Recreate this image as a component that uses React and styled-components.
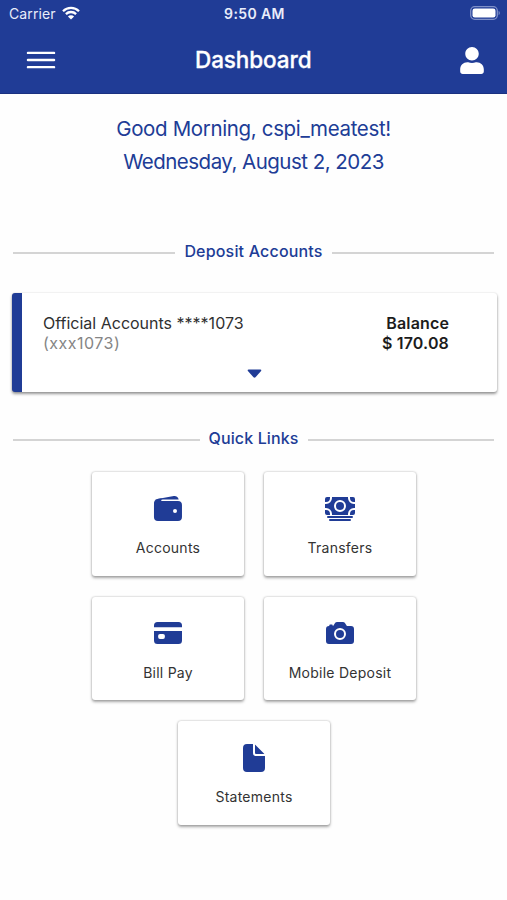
/* eslint-disable react/prop-types */
import styled, { createGlobalStyle } from "styled-components";
import { FaUser } from "react-icons/fa";
import {
  IoCamera,
  IoCard,
  IoCash,
  IoDocument,
  IoMenuOutline,
  IoWallet,
} from "react-icons/io5";

const blue = "#203c96";

const GlobalStyle = createGlobalStyle`
  * {
    box-sizing: border-box;
  }

  body {
    margin: 0;
    background-color: #fefefe;
    font-family: Inter, "Liberation Sans", sans-serif;
  }

  svg {
    display: block;
  }
`;

const Page = styled.div`
  width: 100%;
  min-height: 900px;
`;

const Top = styled.header`
  height: 94px;
  background-color: ${blue};
  border-bottom: 1px solid #1b3180;
  color: white;
`;

const StatusBar = styled.div`
  height: 27px;
  padding: 0 7px 0 9px;
  display: grid;
  grid-template-columns: 1fr auto 1fr;
  align-items: center;
  line-height: 27px;
  color: #e9edfa;
`;

const Carrier = styled.div`
  display: flex;
  align-items: center;
  gap: 6px;
  font-size: 14px;
  letter-spacing: 0.1px;

  svg {
    margin-bottom: 2px;
  }
`;

const Clock = styled.div`
  font-weight: 600;
  font-size: 14px;
  letter-spacing: 0.4px;
`;

const Battery = styled.svg`
  justify-self: end;
  margin-bottom: 1px;
`;

const TitleBar = styled.div`
  height: 66px;
  padding: 0 23px 0 21.5px;
  display: grid;
  grid-template-columns: 1fr auto 1fr;
  align-items: center;
`;

const IconButton = styled.button`
  padding: 0;
  border: 0;
  background: none;
  color: white;
  justify-self: ${(props) => props.$side};
`;

const ProfileIcon = styled(FaUser)`
  width: 24px;
  height: 27px;
`;

const Title = styled.h1`
  margin: 0 0 2px 1px;
  font-size: 22.5px;
  font-weight: 500;
  letter-spacing: -0.1px;
  -webkit-text-stroke: 0.3px;
`;

const Greeting = styled.div`
  padding-top: 18px;
  height: 144px;
  color: ${blue};
  text-align: center;
`;

const GreetingLine = styled.p`
  margin: 0;
  font-size: 20.5px;
  line-height: 33px;
  letter-spacing: ${(props) => props.$spacing};
`;

const SectionTitle = styled.h2`
  margin: 0 13px;
  height: 26px;
  display: flex;
  align-items: center;
  gap: 9px;
  font-size: 16px;
  font-weight: 500;
  line-height: 26px;
  letter-spacing: ${(props) => props.$spacing};
  color: ${blue};

  &::before,
  &::after {
    content: "";
    flex: 1;
    height: 2px;
    margin-top: 4px;
    background-color: #d4d4d4;
  }
`;

const AccountCard = styled.section`
  margin: 29px 10px 33px 12px;
  height: 99px;
  padding: 21px 48px 0 21px;
  border-left: 10px solid ${blue};
  border-radius: 3px;
  background-color: white;
  box-shadow: 0 2px 3px rgba(0, 0, 0, 0.4), 0 0 2px rgba(0, 0, 0, 0.14);
  display: flex;
  flex-direction: column;
`;

const AccountRow = styled.div`
  display: flex;
  justify-content: space-between;
  font-size: 16px;
  line-height: 19.5px;
  color: #303030;
`;

const Muted = styled.div`
  letter-spacing: 0.5px;
  color: #858585;
`;

const Balance = styled.div`
  text-align: right;
  font-weight: 600;
  letter-spacing: 0.15px;
  color: #1c1c1c;
`;

const Caret = styled.svg`
  margin: 16px 0 0 204px;
`;

const Links = styled.nav`
  width: 324px;
  margin: 21px 0 0 92px;
  display: flex;
  flex-wrap: wrap;
  justify-content: center;
  gap: 21px 20px;
`;

const LinkCard = styled.a`
  width: 152px;
  height: 103.5px;
  padding-top: 20.5px;
  display: flex;
  flex-direction: column;
  align-items: center;
  gap: 13.5px;
  border-radius: 3px;
  background-color: white;
  box-shadow: 0 1.5px 3px rgba(0, 0, 0, 0.34), 0 0 2px rgba(0, 0, 0, 0.2);
  color: ${blue};
`;

const LinkLabel = styled.span`
  font-size: 14px;
  line-height: 20px;
  letter-spacing: 0.25px;
  color: #333;
`;

const quickLinks = [
  { label: "Accounts", Icon: IoWallet },
  { label: "Transfers", Icon: IoCash },
  { label: "Bill Pay", Icon: IoCard },
  { label: "Mobile Deposit", Icon: IoCamera },
  { label: "Statements", Icon: IoDocument },
];

function Header() {
  return (
    <Top>
      <StatusBar>
        <Carrier>
          <span>Carrier</span>
          <svg width="18" height="14" viewBox="0 0 18 14" fill="none">
            <path
              d="M1 5.2a11.4 11.4 0 0 1 16 0M3.9 8.1a7.3 7.3 0 0 1 10.2 0"
              stroke="white"
              strokeWidth="2.3"
            />
            <path d="M9 13.6 5.9 10.5a4.4 4.4 0 0 1 6.2 0z" fill="white" />
          </svg>
        </Carrier>
        <Clock>9:50 AM</Clock>
        <Battery width="30" height="14" viewBox="0 0 30 14">
          <rect
            x="0.7"
            y="0.7"
            width="26.6"
            height="12.6"
            rx="4"
            fill="none"
            stroke="#7f90c8"
            strokeWidth="1.3"
          />
          <rect x="2.5" y="2.5" width="23" height="9" rx="2.3" fill="white" />
          <path d="M28.6 5v4c1.6-.7 1.6-3.3 0-4z" fill="#7f90c8" />
        </Battery>
      </StatusBar>
      <TitleBar>
        <IconButton type="button" aria-label="Menu" $side="start">
          <IoMenuOutline size={38} />
        </IconButton>
        <Title>Dashboard</Title>
        <IconButton type="button" aria-label="Profile" $side="end">
          <ProfileIcon />
        </IconButton>
      </TitleBar>
    </Top>
  );
}

function Account() {
  return (
    <AccountCard>
      <AccountRow>
        <div>
          <div>Official Accounts ****1073</div>
          <Muted>(xxx1073)</Muted>
        </div>
        <Balance>
          <div>Balance</div>
          <div>$ 170.08</div>
        </Balance>
      </AccountRow>
      <Caret width="15" height="9" viewBox="0 0 15 9">
        <path
          d="M1.6.5h11.8c.9 0 1.2.8.7 1.4L8.5 8.2c-.6.6-1.4.6-2 0L.9 1.9C.4 1.3.7.5 1.6.5z"
          fill={blue}
        />
      </Caret>
    </AccountCard>
  );
}

function App() {
  return (
    <Page>
      <GlobalStyle />
      <Header />
      <Greeting>
        <GreetingLine $spacing="-0.35px">Good Morning, cspi_meatest!</GreetingLine>
        <GreetingLine $spacing="-0.52px">Wednesday, August 2, 2023</GreetingLine>
      </Greeting>
      <SectionTitle $spacing="0.18px">Deposit Accounts</SectionTitle>
      <Account />
      <SectionTitle $spacing="0.12px">Quick Links</SectionTitle>
      <Links>
        {quickLinks.map(({ label, Icon }) => (
          <LinkCard key={label}>
            <Icon size={32} />
            <LinkLabel>{label}</LinkLabel>
          </LinkCard>
        ))}
      </Links>
    </Page>
  );
}

export default App;
